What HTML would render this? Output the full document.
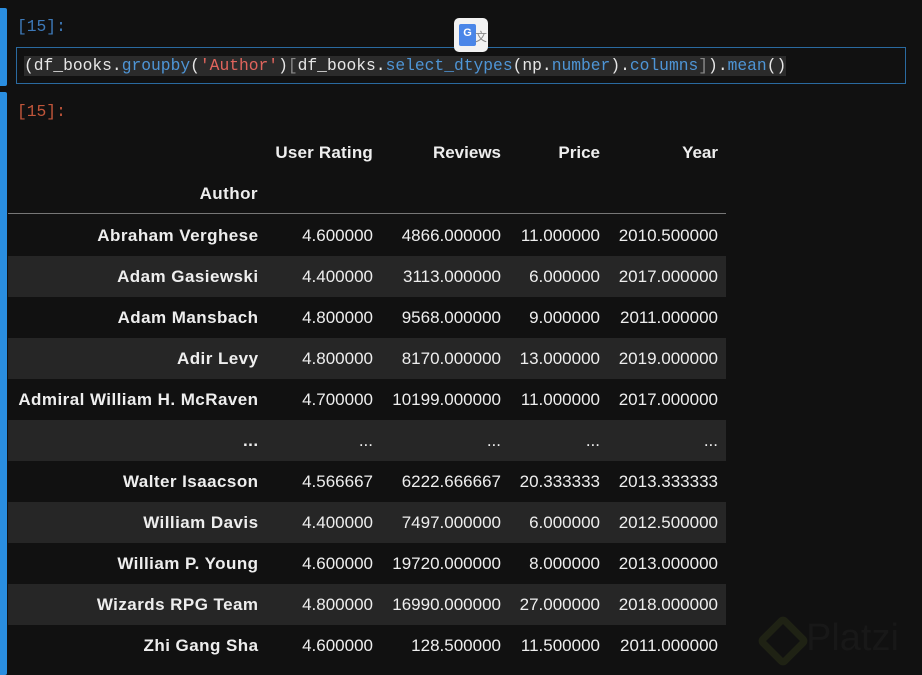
<!DOCTYPE html>
<html><head><meta charset="utf-8"><style>
html,body{margin:0;padding:0;background:#111;width:922px;height:675px;overflow:hidden;position:relative}
.bar{position:absolute;left:0;width:7px;background:#2a8ee0;border-radius:0 2px 2px 0}
.mono{font-family:"Liberation Mono",monospace;font-size:16.3px}
.code{position:absolute;left:16px;top:47px;width:890px;height:37px;border:1.5px solid #2a6aa0;box-sizing:border-box}
.code span.t{position:absolute;left:7px;top:8px;background:#2b2b2b;color:#e6e6e6;white-space:pre;line-height:20px}
.b{color:#4e95d6}.s{color:#e0645c}.g{color:#888}
.p{position:absolute;font-family:"Liberation Sans",sans-serif;color:#eee;font-size:17px;white-space:nowrap}
.row{position:absolute;left:8px;width:718px;height:41px}
.c{position:absolute;top:11px;text-align:right;font-family:"Liberation Sans",sans-serif;font-size:17px;color:#eee;white-space:nowrap}
.h{font-weight:bold}
.n{letter-spacing:0.45px}
</style></head><body>
<div class="bar" style="top:8px;height:78px"></div>
<div class="bar" style="top:92px;height:583px"></div>
<div class="mono" style="position:absolute;left:17px;top:17px;color:#3d79b8">[15]:</div>
<div class="code"><span class="t mono">(df_books.<span class="b">groupby</span>(<span class="s">'Author'</span>)<span class="g">[</span>df_books.<span class="b">select_dtypes</span>(np.<span class="b">number</span>).<span class="b">columns</span><span class="g">]</span>).<span class="b">mean</span>()</span></div>
<div style="position:absolute;left:454px;top:18px;width:34px;height:34px;background:#f2f2f2;border-radius:5px">
<div style="position:absolute;left:5px;top:6px;width:17px;height:22px;background:#4a86e8;border-radius:2px;color:#fff;font:bold 11px 'Liberation Sans',sans-serif;text-align:center;line-height:18px">G</div>
<div style="position:absolute;left:21px;top:10px;color:#888;font:12px 'Liberation Sans',sans-serif">文</div></div>
<div class="mono" style="position:absolute;left:17px;top:102px;color:#c0553a">[15]:</div>

<div class="c h" style="left:0;top:143px;width:373px;letter-spacing:0.2px">User Rating</div>
<div class="c h" style="left:0;top:143px;width:501px">Reviews</div>
<div class="c h" style="left:0;top:143px;width:600px">Price</div>
<div class="c h" style="left:0;top:143px;width:718px">Year</div>
<div class="c h n" style="left:0;top:184px;width:258px">Author</div>
<div style="position:absolute;left:8px;top:213px;width:718px;height:1px;background:#777"></div>

<div id="rows"></div>
<script>
var d=[["Abraham Verghese","4.600000","4866.000000","11.000000","2010.500000"],
["Adam Gasiewski","4.400000","3113.000000","6.000000","2017.000000"],
["Adam Mansbach","4.800000","9568.000000","9.000000","2011.000000"],
["Adir Levy","4.800000","8170.000000","13.000000","2019.000000"],
["Admiral William H. McRaven","4.700000","10199.000000","11.000000","2017.000000"],
["...","...","...","...","..."],
["Walter Isaacson","4.566667","6222.666667","20.333333","2013.333333"],
["William Davis","4.400000","7497.000000","6.000000","2012.500000"],
["William P. Young","4.600000","19720.000000","8.000000","2013.000000"],
["Wizards RPG Team","4.800000","16990.000000","27.000000","2018.000000"],
["Zhi Gang Sha","4.600000","128.500000","11.500000","2011.000000"]];
var R=[250,365,493,592,710],h='';
d.forEach(function(r,i){
 h+='<div class="row" style="top:'+(215+i*41)+'px;background:'+(i%2?'#262626':'transparent')+'">';
 r.forEach(function(v,j){h+='<div class="c'+(j==0?' h n':'')+'" style="left:0;width:'+(R[j]+(j==0?0.5:0))+'px">'+v+'</div>';});
 h+='</div>';});
document.getElementById('rows').innerHTML=h;
</script>
<div style="position:absolute;left:764px;top:622px;width:24px;height:24px;border:7px solid #1f2214;border-radius:6px;transform:rotate(45deg)"></div>
<div class="p" style="left:806px;top:617px;font-size:38px;color:#181818">Platzi</div>
</body></html>
